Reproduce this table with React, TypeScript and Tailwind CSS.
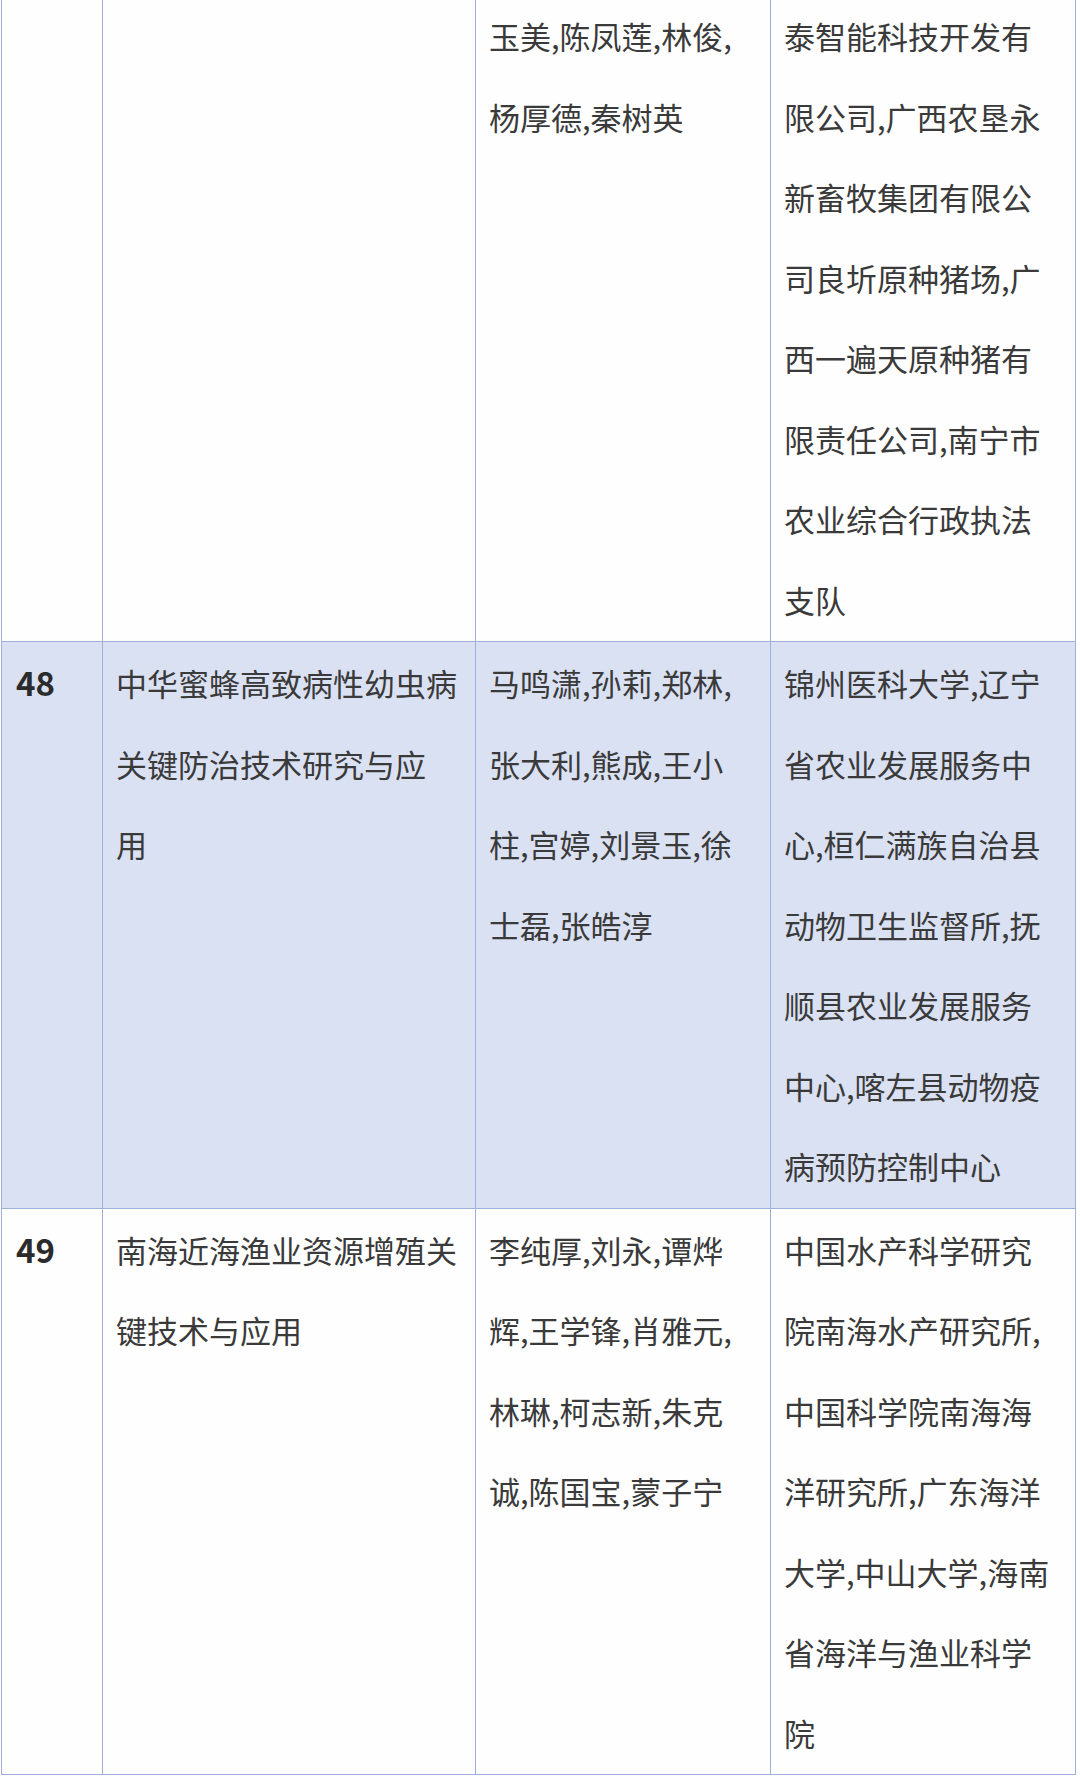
const rows = [
  {
    no: '',
    title: [] as string[],
    people: ['玉美,陈凤莲,林俊,', '杨厚德,秦树英'],
    units: [
      '泰智能科技开发有',
      '限公司,广西农垦永',
      '新畜牧集团有限公',
      '司良圻原种猪场,广',
      '西一遍天原种猪有',
      '限责任公司,南宁市',
      '农业综合行政执法',
      '支队',
    ],
    shaded: false,
  },
  {
    no: '48',
    title: ['中华蜜蜂高致病性幼虫病', '关键防治技术研究与应', '用'],
    people: ['马鸣潇,孙莉,郑林,', '张大利,熊成,王小', '柱,宫婷,刘景玉,徐', '士磊,张皓淳'],
    units: [
      '锦州医科大学,辽宁',
      '省农业发展服务中',
      '心,桓仁满族自治县',
      '动物卫生监督所,抚',
      '顺县农业发展服务',
      '中心,喀左县动物疫',
      '病预防控制中心',
    ],
    shaded: true,
  },
  {
    no: '49',
    title: ['南海近海渔业资源增殖关', '键技术与应用'],
    people: ['李纯厚,刘永,谭烨', '辉,王学锋,肖雅元,', '林琳,柯志新,朱克', '诚,陈国宝,蒙子宁'],
    units: [
      '中国水产科学研究',
      '院南海水产研究所,',
      '中国科学院南海海',
      '洋研究所,广东海洋',
      '大学,中山大学,海南',
      '省海洋与渔业科学',
      '院',
    ],
    shaded: false,
  },
];

function Lines({ lines }: { lines: string[] }) {
  return (
    <>
      {lines.map((l, i) => (
        <div key={i} className="whitespace-nowrap">
          {l}
        </div>
      ))}
    </>
  );
}

export default function App() {
  return (
    <div className="min-h-screen bg-white overflow-hidden">
      <div
        className="ml-px -mt-[6px] w-[1075px] border-l border-t border-[#9fb1d9] text-[31px] leading-[80.5px] text-[#3a3a3a]"
        style={{ fontFamily: '"Noto Sans CJK SC", "Microsoft YaHei", sans-serif' }}
      >
        {rows.map((r, i) => (
          <div
            key={i}
            className={`grid grid-cols-[101px_373px_295px_305px] ${r.shaded ? 'bg-[#dae1f3]' : 'bg-[#fefefe]'}`}
          >
            <div className="border-r border-b border-[#9fb1d9] pl-[14px] pt-0 pb-[2px] text-[33px] font-bold text-[#2b2b2b]">
              {r.no}
            </div>
            <div className="border-r border-b border-[#9fb1d9] pl-[13px] py-px">
              <Lines lines={r.title} />
            </div>
            <div className="border-r border-b border-[#9fb1d9] pl-[13px] py-px">
              <Lines lines={r.people} />
            </div>
            <div className="border-r border-b border-[#9fb1d9] pl-[13px] py-px">
              <Lines lines={r.units} />
            </div>
          </div>
        ))}
      </div>
    </div>
  );
}
